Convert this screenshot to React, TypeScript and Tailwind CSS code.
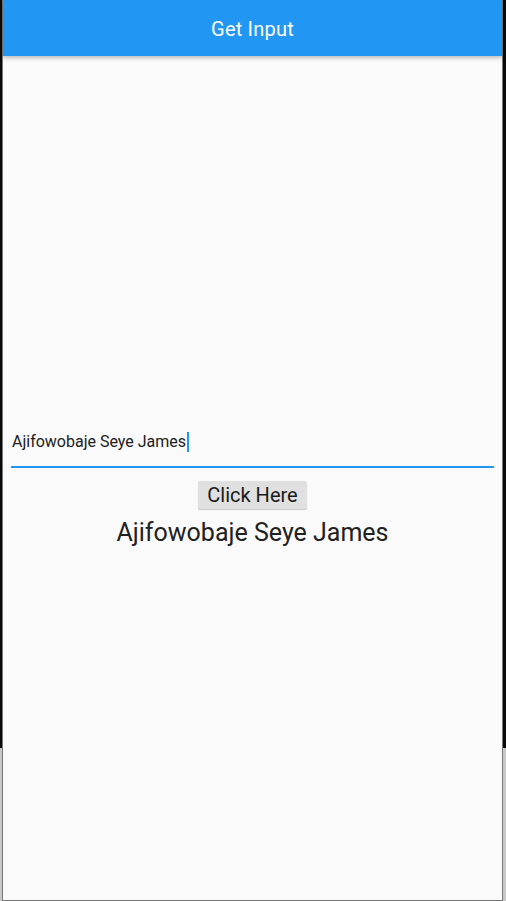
export default function App() {
  const name = 'Ajifowobaje Seye James';

  return (
    <div className="w-[506px] h-[901px] flex bg-[#0d0d0d] overflow-hidden" style={{ fontFamily: 'Roboto, "Noto Sans", sans-serif' }}>
      {/* left edge */}
      <div className="w-[2px] flex flex-col">
        <div className="h-[748px] bg-[#0a0a0a]" />
        <div className="flex-1 bg-[#c8c8c8]" />
      </div>

      {/* app window */}
      <div className="w-[501px] h-[901px] flex flex-col bg-[#fafafa] border-l border-r border-b border-[#777]">
        <header className="h-14 shrink-0 bg-[#2196f3] flex items-center justify-center pt-[2px] shadow-[0_2px_4px_rgba(0,0,0,0.25)] z-10">
          <h1 className="text-[20px] font-normal text-white tracking-[0.2px]">Get Input</h1>
        </header>

        <main className="flex-1 flex flex-col justify-center px-2 pt-[20px]">
          {/* text field */}
          <div className="flex flex-col">
            <div className="flex items-center pt-[4px] pb-[14px] pl-[1px]">
              <span className="text-[16px] text-[#212121] leading-[20px]">{name}</span>
              <span className="w-[2px] h-[20px] bg-[#2196f3] ml-[1px]" />
            </div>
            <div className="h-[2px] bg-[#2196f3]" />
          </div>

          <div className="flex flex-col items-center mt-[13px]">
            <button className="h-[28px] px-[9px] bg-[#e0e0e0] rounded-[2px] shadow-[0_1px_1px_rgba(0,0,0,0.2)] text-[20px] leading-[28px] text-[#1a1a1a]">
              Click Here
            </button>
            <p className="text-[25px] leading-[32px] text-[#212121] mt-[8px]">{name}</p>
          </div>
        </main>
      </div>

      {/* right edge */}
      <div className="flex-1 flex flex-col">
        <div className="h-[748px] bg-[#0a0a0a]" />
        <div className="flex-1 bg-[#c8c8c8]" />
      </div>
    </div>
  );
}
